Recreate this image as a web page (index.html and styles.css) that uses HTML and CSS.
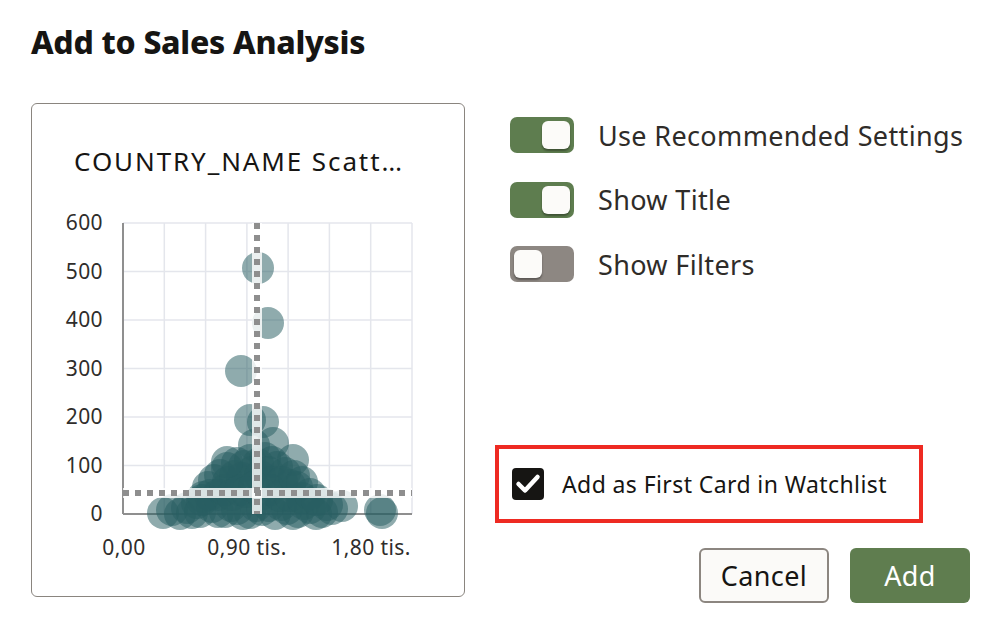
FILE: index.html
```html
<!DOCTYPE html>
<html lang="en">
<head>
<meta charset="utf-8">
<title>Add to Sales Analysis</title>
<link rel="stylesheet" href="styles.css">
</head>
<body>
<div class="dialog">
  <h1 class="dialog-title">Add to Sales Analysis</h1>
  <div class="dialog-body">
    <div class="card">
      <div class="card-title">COUNTRY_NAME Scatt…</div>
      <svg class="chart" width="432" height="396" viewBox="0 0 432 396">
        <g class="grid">
          <line x1="132.3" y1="23" x2="132.3" y2="314"/>
          <line x1="173.6" y1="23" x2="173.6" y2="314"/>
          <line x1="214.9" y1="23" x2="214.9" y2="314"/>
          <line x1="256.1" y1="23" x2="256.1" y2="314"/>
          <line x1="297.4" y1="23" x2="297.4" y2="314"/>
          <line x1="338.7" y1="23" x2="338.7" y2="314"/>
          <line x1="380" y1="23" x2="380" y2="314"/>
          <line x1="91" y1="23" x2="380" y2="23"/>
          <line x1="91" y1="71.5" x2="380" y2="71.5"/>
          <line x1="91" y1="120" x2="380" y2="120"/>
          <line x1="91" y1="168.5" x2="380" y2="168.5"/>
          <line x1="91" y1="217" x2="380" y2="217"/>
          <line x1="91" y1="265.5" x2="380" y2="265.5"/>
        </g>
        <g class="axis">
          <line x1="91" y1="23" x2="91" y2="314"/>
          <line x1="91" y1="314" x2="380" y2="314"/>
        </g>
        <g class="dots">
          <circle cx="226" cy="68" r="16"/>
          <circle cx="236" cy="123" r="16"/>
          <circle cx="209" cy="171" r="16"/>
          <circle cx="218" cy="220" r="16"/>
          <circle cx="231" cy="222" r="16"/>
          <circle cx="241" cy="243" r="16"/>
          <circle cx="261" cy="260" r="16"/>
          <circle cx="348" cy="310" r="16"/>
          <circle cx="350" cy="313" r="16"/>
          <circle cx="310" cy="306" r="16"/>
          <circle cx="131" cy="313" r="16"/>
          <circle cx="140" cy="310" r="16"/>
          <circle cx="148" cy="314" r="16"/>
          <circle cx="155" cy="308" r="16"/>
          <circle cx="160" cy="313" r="16"/>
          <circle cx="165" cy="303" r="16"/>
          <circle cx="171" cy="297" r="16"/>
          <circle cx="176" cy="287" r="16"/>
          <circle cx="182" cy="280" r="16"/>
          <circle cx="188" cy="275" r="16"/>
          <circle cx="195" cy="268" r="16"/>
          <circle cx="205" cy="263" r="16"/>
          <circle cx="212" cy="266" r="16"/>
          <circle cx="218" cy="260" r="16"/>
          <circle cx="226" cy="264" r="16"/>
          <circle cx="233" cy="258" r="16"/>
          <circle cx="240" cy="262" r="16"/>
          <circle cx="245" cy="267" r="16"/>
          <circle cx="253" cy="273" r="16"/>
          <circle cx="258" cy="285" r="16"/>
          <circle cx="265" cy="287" r="16"/>
          <circle cx="196" cy="282" r="16"/>
          <circle cx="203" cy="276" r="16"/>
          <circle cx="210" cy="278" r="16"/>
          <circle cx="220" cy="272" r="16"/>
          <circle cx="228" cy="276" r="16"/>
          <circle cx="236" cy="272" r="16"/>
          <circle cx="240" cy="282" r="16"/>
          <circle cx="250" cy="282" r="16"/>
          <circle cx="180" cy="307" r="16"/>
          <circle cx="186" cy="312" r="16"/>
          <circle cx="193" cy="312" r="16"/>
          <circle cx="199" cy="306" r="16"/>
          <circle cx="205" cy="309" r="16"/>
          <circle cx="211" cy="314" r="16"/>
          <circle cx="218" cy="313" r="16"/>
          <circle cx="224" cy="306" r="16"/>
          <circle cx="230" cy="310" r="16"/>
          <circle cx="237" cy="306" r="16"/>
          <circle cx="243" cy="314" r="16"/>
          <circle cx="249" cy="305" r="16"/>
          <circle cx="255" cy="309" r="16"/>
          <circle cx="261" cy="314" r="16"/>
          <circle cx="266" cy="312" r="16"/>
          <circle cx="272" cy="304" r="16"/>
          <circle cx="278" cy="308" r="16"/>
          <circle cx="284" cy="314" r="16"/>
          <circle cx="290" cy="312" r="16"/>
          <circle cx="295" cy="305" r="16"/>
          <circle cx="300" cy="309" r="16"/>
          <circle cx="170" cy="300" r="16"/>
          <circle cx="178" cy="295" r="16"/>
          <circle cx="186" cy="295" r="16"/>
          <circle cx="193" cy="290" r="16"/>
          <circle cx="200" cy="295" r="16"/>
          <circle cx="208" cy="290" r="16"/>
          <circle cx="215" cy="292" r="16"/>
          <circle cx="222" cy="287" r="16"/>
          <circle cx="230" cy="294" r="16"/>
          <circle cx="238" cy="290" r="16"/>
          <circle cx="248" cy="296" r="16"/>
          <circle cx="258" cy="296" r="16"/>
          <circle cx="270" cy="298" r="16"/>
          <circle cx="278" cy="294" r="16"/>
          <circle cx="285" cy="300" r="16"/>
          <circle cx="222" cy="245" r="16"/>
          <circle cx="195" cy="262" r="16"/>
          <circle cx="168" cy="312" r="16"/>
          <circle cx="262" cy="276" r="16"/>
          <circle cx="270" cy="282" r="16"/>
        </g>
        <g class="ref">
          <line class="ref-band" x1="225" y1="23" x2="225" y2="314"/>
          <line class="ref-band" x1="91" y1="293" x2="380" y2="293"/>
          <line class="ref-dash" x1="225" y1="23" x2="225" y2="314"/>
          <line class="ref-dash" x1="91" y1="293" x2="380" y2="293"/>
        </g>
        <g class="ylabels">
          <text x="71" y="30">600</text>
          <text x="71" y="78.5">500</text>
          <text x="71" y="127">400</text>
          <text x="71" y="175.5">300</text>
          <text x="71" y="224">200</text>
          <text x="71" y="272.5">100</text>
          <text x="71" y="321">0</text>
        </g>
        <g class="xlabels">
          <text x="92" y="355">0,00</text>
          <text x="215" y="355">0,90 tis.</text>
          <text x="339" y="355">1,80 tis.</text>
        </g>
      </svg>
    </div>
    <div class="side">
      <div class="toggles">
        <div class="toggle-row">
          <span class="switch on"><span class="thumb"></span></span>
          <span class="toggle-label">Use Recommended Settings</span>
        </div>
        <div class="toggle-row">
          <span class="switch on"><span class="thumb"></span></span>
          <span class="toggle-label">Show Title</span>
        </div>
        <div class="toggle-row">
          <span class="switch off"><span class="thumb"></span></span>
          <span class="toggle-label">Show Filters</span>
        </div>
      </div>
      <div class="highlight">
        <div class="check-row">
          <span class="checkbox">
            <svg width="32" height="32" viewBox="0 0 32 32"><path d="M6.5 16 L13 22.5 L25.5 9" fill="none" stroke="#ffffff" stroke-width="4.5" stroke-linecap="round" stroke-linejoin="round"/></svg>
          </span>
          <span class="check-label">Add as First Card in Watchlist</span>
        </div>
      </div>
      <div class="actions">
        <button class="btn btn-secondary">Cancel</button>
        <button class="btn btn-primary">Add</button>
      </div>
    </div>
  </div>
</div>
</body>
</html>
```
FILE: styles.css
```css
* { box-sizing: border-box; }
html, body {
  margin: 0;
  padding: 0;
  background: #ffffff;
}
body {
  font-family: "Noto Sans", "Open Sans", sans-serif;
  color: #161513;
  width: 998px;
  height: 636px;
  overflow: hidden;
}
.dialog {
  padding: 22px 28px 0 31px;
}
.dialog-title {
  margin: 0;
  font-size: 32px;
  line-height: 40px;
  font-weight: 800;
  letter-spacing: -0.3px;
  color: #161513;
}
.dialog-body {
  display: flex;
  align-items: flex-start;
  margin-top: 41px;
}
.card {
  width: 434px;
  height: 494px;
  border: 1px solid #8a857f;
  border-radius: 6px;
  padding-top: 41px;
  flex: none;
}
.card-title {
  font-size: 26px;
  line-height: 32px;
  letter-spacing: 1.9px;
  text-align: center;
  padding-right: 18px;
  color: #161513;
  white-space: nowrap;
}
.chart {
  display: block;
  margin-top: 23px;
}
.grid line {
  stroke: #e4e6ec;
  stroke-width: 1.5;
}
.axis line {
  stroke: #8f8f8f;
  stroke-width: 2;
}
.dots circle {
  fill: #285e62;
  fill-opacity: 0.52;
}
.ref-band {
  stroke: #ffffff;
  stroke-opacity: 0.82;
  stroke-width: 10;
}
.ref-dash {
  stroke: #8e8e8e;
  stroke-width: 6;
  stroke-dasharray: 6 6;
}
.ylabels text, .xlabels text {
  font-family: "Noto Sans", sans-serif;
  font-size: 21px;
  letter-spacing: 0.4px;
  fill: #2f2d2b;
}
.ylabels text { text-anchor: end; }
.xlabels text { text-anchor: middle; }
.side {
  margin-left: 30px;
  width: 475px;
  display: flex;
  flex-direction: column;
}
.toggles {
  display: flex;
  flex-direction: column;
  gap: 28.5px;
  padding-left: 15px;
  margin-top: 14px;
}
.toggle-row {
  display: flex;
  align-items: center;
  gap: 24px;
  height: 36px;
}
.switch {
  position: relative;
  width: 64px;
  height: 36px;
  border-radius: 7px;
  flex: none;
  display: flex;
  align-items: center;
  padding: 0 4px;
}
.switch.on {
  background: #5e7d4f;
  justify-content: flex-end;
}
.switch.off {
  background: #8d8782;
  justify-content: flex-start;
}
.thumb {
  width: 28px;
  height: 28px;
  border-radius: 6px;
  background: #fcfbf9;
  box-shadow: 0 2px 2px rgba(0, 0, 0, 0.35);
}
.toggle-label {
  font-size: 27px;
  letter-spacing: 0.35px;
  color: #2f2c29;
  white-space: nowrap;
}
.highlight {
  margin-top: 163px;
  width: 428px;
  height: 78px;
  border: 4px solid #ee2a22;
  display: flex;
  align-items: center;
  padding-left: 13px;
}
.check-row {
  display: flex;
  align-items: center;
  gap: 18px;
}
.checkbox {
  width: 32px;
  height: 32px;
  border-radius: 4px;
  background: #161513;
  display: block;
  flex: none;
}
.checkbox svg { display: block; }
.check-label {
  font-size: 23px;
  letter-spacing: 0.4px;
  color: #161513;
  white-space: nowrap;
}
.actions {
  display: flex;
  justify-content: flex-end;
  gap: 21px;
  margin-top: 25px;
}
.btn {
  height: 55px;
  border-radius: 6px;
  font-family: "Noto Sans", sans-serif;
  font-size: 27px;
  letter-spacing: 0.4px;
  padding: 0;
  cursor: pointer;
}
.btn-secondary {
  width: 130px;
  background: #fbfaf8;
  border: 2px solid #8c8680;
  color: #161513;
}
.btn-primary {
  width: 120px;
  background: #5f7d4f;
  border: none;
  color: #ffffff;
}
```
